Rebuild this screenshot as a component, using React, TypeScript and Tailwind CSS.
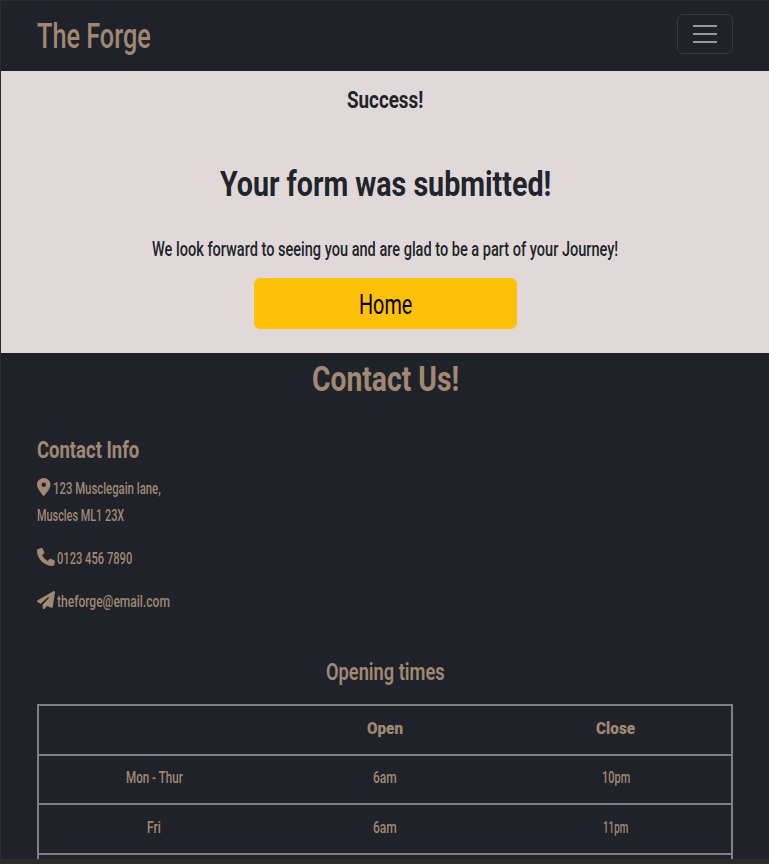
import { useLayoutEffect, useRef, useState } from "react";
import { FaLocationDot, FaPaperPlane, FaPhone } from "react-icons/fa6";

type CondensedProps = { text: string; width: number; className?: string };

// Sets a line of text in a condensed width, keeping its full height.
function Condensed({ text, width, className = "" }: CondensedProps) {
  const ref = useRef<HTMLSpanElement>(null);
  const [scale, setScale] = useState(1);
  useLayoutEffect(() => {
    if (ref.current) setScale(width / ref.current.offsetWidth);
  }, [text, width]);
  return (
    <span className={`block shrink-0 ${className}`} style={{ width }}>
      <span
        ref={ref}
        className="block w-max origin-left whitespace-nowrap"
        style={{ transform: `scaleX(${scale})` }}
      >
        {text}
      </span>
    </span>
  );
}

const hours = [
  { day: "Mon - Thur", dayW: 57, open: "6am", close: "10pm", closeW: 28, row: "h-[49px] pb-[3px]" },
  { day: "Fri", dayW: 14, open: "6am", close: "11pm", closeW: 25, row: "h-[50px] pb-[3px]" },
];

export default function App() {
  return (
    <div className="flex h-[864px] flex-col overflow-hidden border-t border-b-[5px] border-l border-[#2c2c2d] bg-[#1f2229] font-['Roboto','Liberation_Sans',sans-serif] text-[#a08874]">
      <header className="flex h-[70px] shrink-0 items-start justify-between pr-9 pl-9">
        <Condensed text="The Forge" width={114} className="text-[35px] leading-[71px] font-medium" />
        <button
          aria-label="Menu"
          className="mt-[13px] flex h-10 w-14 flex-col items-center justify-center gap-1.5 rounded-md border border-[#35383f]"
        >
          <span className="h-0.5 w-6 bg-[#96999b]" />
          <span className="h-0.5 w-6 bg-[#96999b]" />
          <span className="h-0.5 w-6 bg-[#96999b]" />
        </button>
      </header>

      <main className="flex h-[282px] shrink-0 flex-col items-center bg-[#e1d9d9] pt-4 text-[#212529]">
        <h3><Condensed text="Success!" width={76} className="text-[23px] leading-7 font-bold" /></h3>
        <h1 className="mt-12"><Condensed text="Your form was submitted!" width={331} className="text-[35px] leading-[44px] font-bold" /></h1>
        <p className="mt-7"><Condensed text="We look forward to seeing you and are glad to be a part of your Journey!" width={466} className="text-[20px] leading-7 font-medium" /></p>
        <a className="mt-[15px] ml-px flex h-[51px] w-[263px] items-center justify-center rounded-md bg-[#ffc107] pt-[2px] text-black">
          <Condensed text="Home" width={53} className="text-[28px] leading-10" />
        </a>
      </main>

      <footer className="flex min-h-0 flex-1 flex-col px-9 pt-[5px]">
        <h2 className="flex justify-center"><Condensed text="Contact Us!" width={147} className="text-[35px] leading-[44px] font-bold" /></h2>
        <h4 className="mt-[35px]"><Condensed text="Contact Info" width={102} className="text-[23px] leading-7 font-bold" /></h4>
        <address className="mt-[10px] text-[16.5px] leading-[27px] not-italic">
          <div className="flex gap-[2px]">
            <FaLocationDot className="mt-[3px] h-[18px] w-[13.5px]" />
            <Condensed text="123 Musclegain lane," width={108} className="font-medium" />
          </div>
          <Condensed text="Muscles ML1 23X" width={87} className="font-medium" />
          <div className="mt-4 flex gap-[2px]">
            <FaPhone className="mt-[3px] size-[18px]" />
            <Condensed text="0123 456 7890" width={75} className="font-medium" />
          </div>
          <div className="mt-4 flex gap-[2px]">
            <FaPaperPlane className="mt-[3px] size-[18px]" />
            <Condensed text="theforge@email.com" width={113} className="font-medium" />
          </div>
        </address>

        <h4 className="mt-11 flex justify-center"><Condensed text="Opening times" width={119} className="text-[23px] leading-7 font-semibold" /></h4>
        <div className="mt-[17px] min-h-0 flex-1 border-x-2 border-t-2 border-[#808080] text-[16.5px] leading-6">
          <div className="grid h-[50px] grid-cols-3 items-center justify-items-center border-b-2 border-[#808080] pb-[3px] font-black">
            <span />
            <Condensed text="Open" width={36} />
            <Condensed text="Close" width={39} />
          </div>
          {hours.map((h) => (
            <div key={h.day} className={`grid grid-cols-3 items-center justify-items-center border-b-2 border-[#808080] font-medium ${h.row}`}>
              <Condensed text={h.day} width={h.dayW} />
              <Condensed text={h.open} width={24} />
              <Condensed text={h.close} width={h.closeW} />
            </div>
          ))}
        </div>
      </footer>
    </div>
  );
}
